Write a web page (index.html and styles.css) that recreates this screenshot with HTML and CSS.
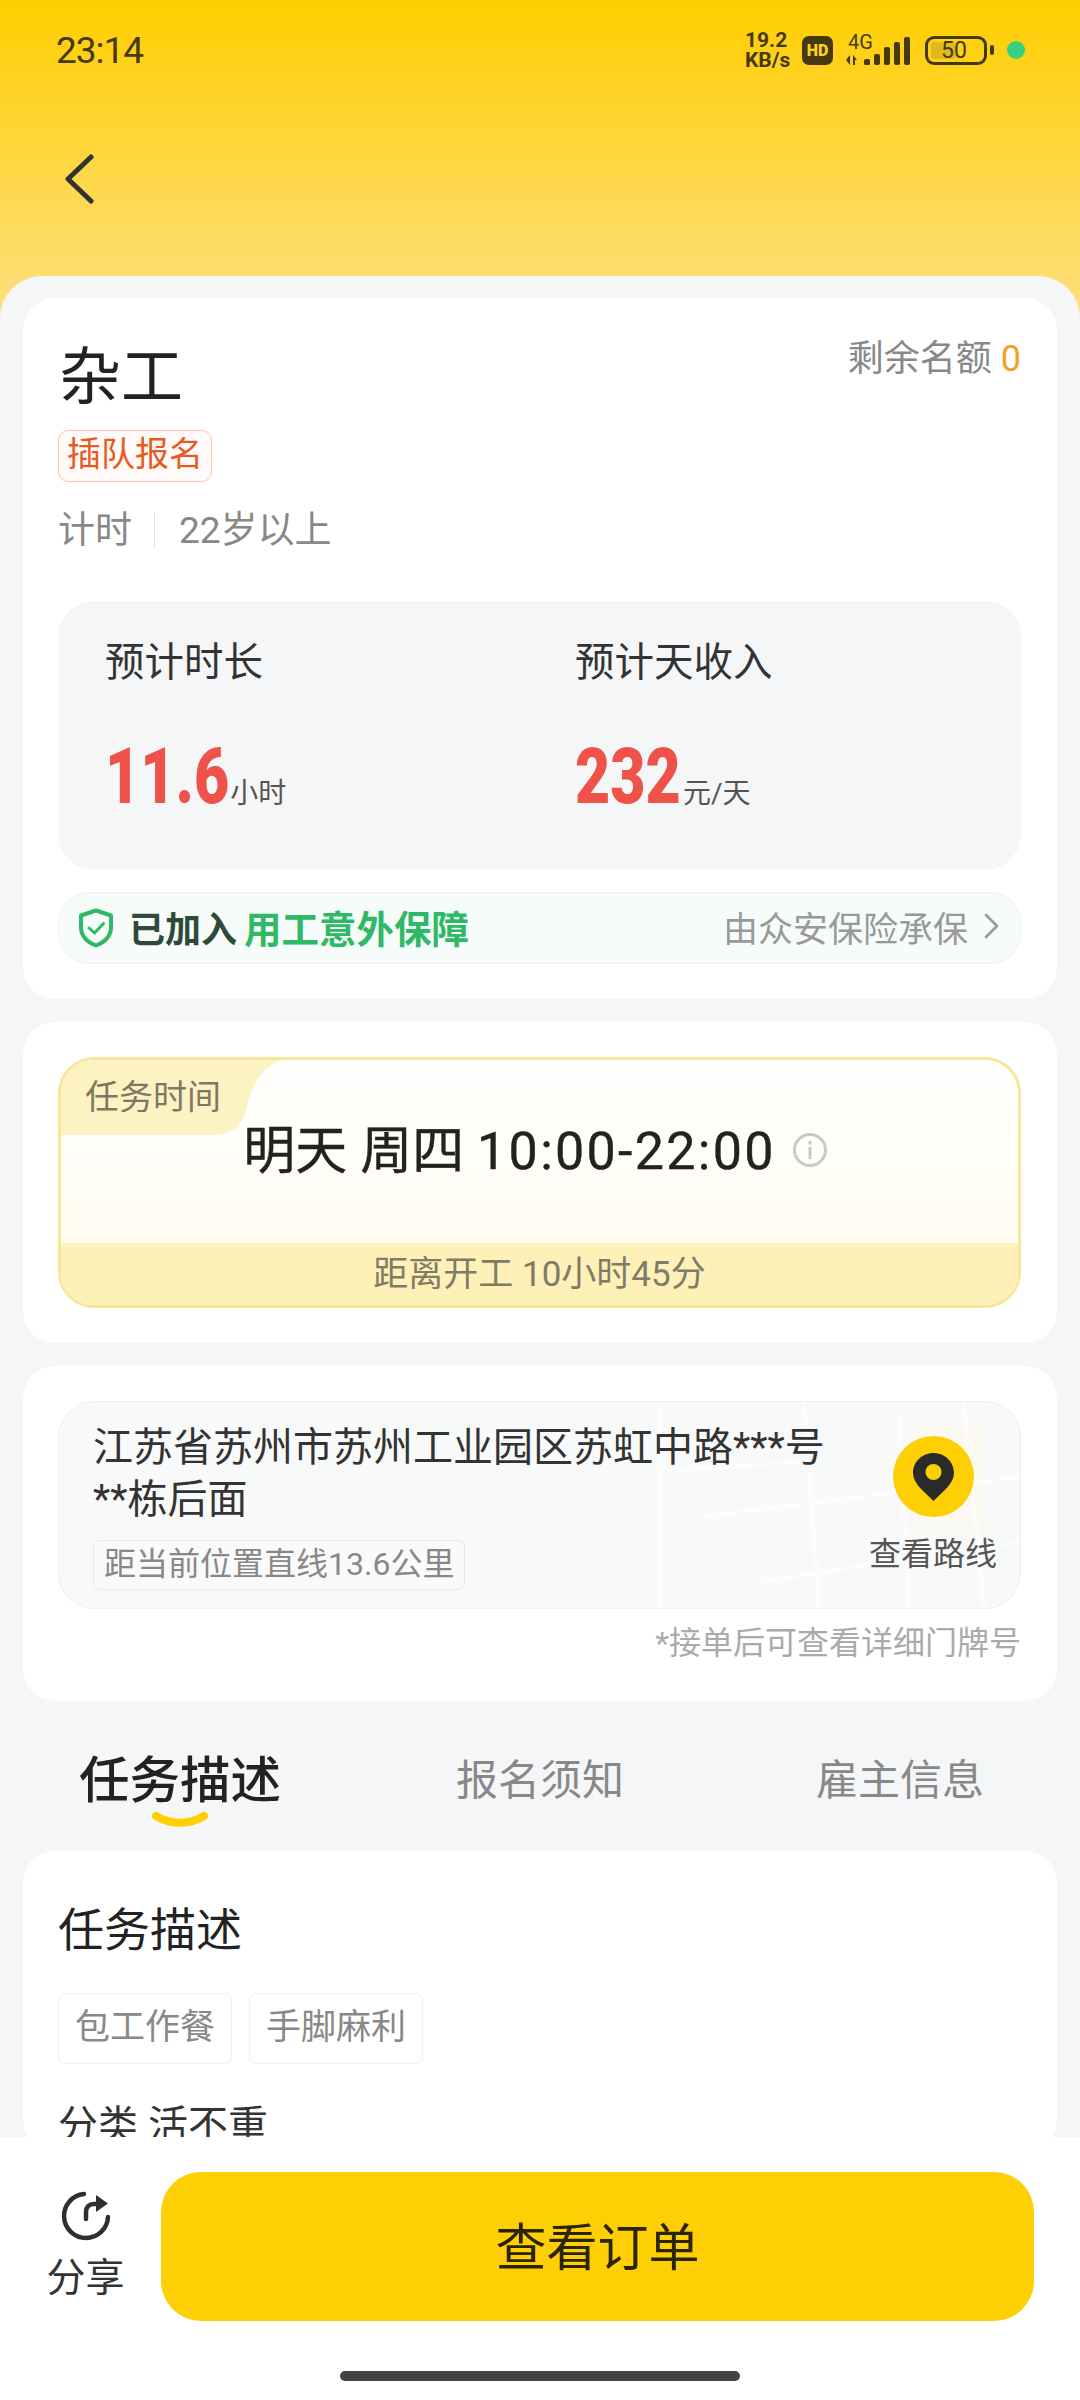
FILE: index.html
```html
<!DOCTYPE html>
<html lang="zh-CN">
<head>
    <meta charset="UTF-8">
    <meta name="viewport" content="width=device-width, initial-scale=1.0">
    <title>杂工</title>
    <link rel="stylesheet" href="styles.css">
</head>
<body>
<div class="page">
    <div class="statusbar">
        <span class="clock">23:14</span>
        <div class="status-right">
            <div class="speed"><div>19.2</div><div>KB/s</div></div>
            <div class="hd">HD</div>
            <div class="signal">
                <span class="signal-text">4G</span>
                <svg width="66" height="32" viewBox="0 0 66 32">
                    <path d="M5 21v10l-4-5zM8 21l4 5h-2v5H8z" fill="#46390f"/>
                    <rect x="19" y="25" width="6" height="6" rx="1.5" fill="#46390f"/>
                    <rect x="29" y="20" width="6" height="11" rx="2" fill="#46390f"/>
                    <rect x="39" y="13" width="6" height="18" rx="2" fill="#46390f"/>
                    <rect x="49" y="8" width="6" height="23" rx="2" fill="#46390f"/>
                    <rect x="59" y="3" width="6" height="28" rx="2" fill="#46390f"/>
                </svg>
            </div>
            <div class="battery">
                <div class="battery-fill" style="width: 50%"></div>
                <span class="battery-num">50</span>
            </div>
            <div class="battery-nub"></div>
            <div class="dot"></div>
        </div>
    </div>

    <div class="nav">
        <svg width="32" height="50" viewBox="0 0 32 50">
            <path d="M28 3 L5 25 L28 47" fill="none" stroke="#333" stroke-width="5" stroke-linecap="round" stroke-linejoin="round"/>
        </svg>
    </div>

    <div class="sheet">
        <section class="card card-job">
            <div class="job-head">
                <h1 class="job-title">杂工</h1>
                <div class="quota">剩余名额 <span class="quota-num">0</span></div>
            </div>
            <div class="tag-row"><span class="tag-orange">插队报名</span></div>
            <div class="meta">
                <span>计时</span>
                <i class="meta-line"></i>
                <span>22岁以上</span>
            </div>
            <div class="stats">
                <div class="stat">
                    <div class="stat-label">预计时长</div>
                    <div class="stat-value"><b class="num-hours">11.6</b><span>小时</span></div>
                </div>
                <div class="stat">
                    <div class="stat-label">预计天收入</div>
                    <div class="stat-value"><b class="num-pay">232</b><span>元/天</span></div>
                </div>
            </div>
            <div class="insure">
                <svg width="36" height="40" viewBox="0 0 36 40">
                    <path d="M18 2.5 L33 7.5 V19 C33 28 27 34 18 37.5 C9 34 3 28 3 19 V7.5 Z" fill="none" stroke="#2fb866" stroke-width="4" stroke-linejoin="round"/>
                    <path d="M11 20 L16.5 25 L25.5 15.5" fill="none" stroke="#2fb866" stroke-width="3" stroke-linecap="round" stroke-linejoin="round"/>
                </svg>
                <span class="insure-text">已加入<em>用工意外保障</em></span>
                <span class="insure-by">由众安保险承保</span>
                <svg width="16" height="26" viewBox="0 0 16 26">
                    <path d="M2 2 L13 13 L2 24" fill="none" stroke="#999" stroke-width="2.6" stroke-linecap="round" stroke-linejoin="round"/>
                </svg>
            </div>
        </section>

        <section class="card card-time">
            <div class="timebox">
                <div class="time-tab">
                    <svg class="time-tab-bg" width="222" height="76" viewBox="0 0 222 76">
                        <path d="M0 0H220C202 6 191 24 186 46C182 66 172 75 150 75H0Z" fill="#fdf2c2"/>
                    </svg>
                    <span class="time-tab-text">任务时间</span>
                </div>
                <div class="time-main">
                    <span>明天 周四 <span class="time-digits">10:00-22:00</span></span>
                    <svg width="36" height="36" viewBox="0 0 36 36">
                        <circle cx="18" cy="18" r="15.5" fill="none" stroke="#c9c9c9" stroke-width="3"/>
                        <rect x="16.5" y="15" width="3" height="12" fill="#c9c9c9"/>
                        <rect x="16.5" y="9" width="3" height="3.5" fill="#c9c9c9"/>
                    </svg>
                </div>
                <div class="time-foot">距离开工 10小时45分</div>
            </div>
        </section>

        <section class="card card-addr">
            <div class="addr">
                <svg class="addr-map" width="961" height="206" viewBox="0 0 961 206">
                    <path d="M850 20H925V130H850Z" fill="#fdf9f0" opacity="0.7"/>
                    <g fill="none" stroke="#fff" stroke-width="4" opacity="0.55">
                        <path d="M600 0V206M745 0L760 206M905 0L925 206"/>
                        <path d="M640 115L961 75M700 180L961 140M590 70L740 60"/>
                        <path d="M840 10L850 206"/>
                    </g>
                </svg>
                <div class="addr-left">
                    <div class="addr-text">江苏省苏州市苏州工业园区苏虹中路***号<br>**栋后面</div>
                    <span class="addr-dist">距当前位置直线13.6公里</span>
                </div>
                <div class="addr-route">
                    <svg width="81" height="81" viewBox="0 0 81 81">
                        <circle cx="40.5" cy="40.5" r="40.5" fill="#ffcf05"/>
                        <path d="M40.5 17C29 17 20 26 20 37C20 48 31 55 40.5 65C50 55 61 48 61 37C61 26 52 17 40.5 17Z" fill="#2b2b2b"/>
                        <circle cx="40.5" cy="36" r="8" fill="#ffcf05"/>
                    </svg>
                    <div class="addr-route-text">查看路线</div>
                </div>
            </div>
            <div class="addr-note">*接单后可查看详细门牌号</div>
        </section>

        <div class="tabs">
            <div class="tab tab-active">
                任务描述
                <svg class="tab-smile" width="58" height="20" viewBox="0 0 58 20">
                    <path d="M5 5C20 14 38 14 53 5" fill="none" stroke="#ffcf05" stroke-width="8" stroke-linecap="round"/>
                </svg>
            </div>
            <div class="tab">报名须知</div>
            <div class="tab">雇主信息</div>
        </div>

        <section class="card card-desc">
            <h2 class="desc-title">任务描述</h2>
            <div class="chips">
                <span class="chip">包工作餐</span>
                <span class="chip">手脚麻利</span>
            </div>
            <p class="desc-line">分类 活不重</p>
        </section>
    </div>

    <footer class="footer">
        <div class="footer-row">
            <div class="share">
                <svg width="50" height="50" viewBox="0 0 50 50">
                    <path d="M23 3A22 22 0 1 0 47 26" fill="none" stroke="#2f2f2f" stroke-width="4.5" stroke-linecap="round"/>
                    <path d="M25 28V21C25 16 28 13 33 13H37" fill="none" stroke="#2f2f2f" stroke-width="4.5" stroke-linecap="round"/>
                    <path d="M35 4L47 12.5L35 21Z" fill="#2f2f2f"/>
                </svg>
                <span class="share-text">分享</span>
            </div>
            <button class="order-btn">查看订单</button>
        </div>
        <div class="home-bar"></div>
    </footer>
</div>
</body>
</html>
```

FILE: styles.css
```css
* {
    box-sizing: border-box;
}
html, body {
    margin: 0;
    padding: 0;
}
body {
    font-family: Roboto, "Noto Sans CJK SC", sans-serif;
    color: #222;
}
.page {
    width: 1080px;
    height: 2400px;
    display: flex;
    flex-direction: column;
    overflow: hidden;
    background: linear-gradient(#ffce00 0, #fde081 320px) no-repeat;
    background-size: 100% 320px;
}

/* status bar */
.statusbar {
    height: 100px;
    flex-shrink: 0;
    display: flex;
    align-items: center;
    justify-content: space-between;
    padding: 0 55px 0 56px;
    color: #46390f;
}
.clock {
    font-size: 37px;
    letter-spacing: -1px;
}
.status-right {
    display: flex;
    align-items: center;
}
.speed {
    width: 48px;
    font-size: 21px;
    line-height: 20px;
    font-weight: 700;
}
.hd {
    width: 31px;
    height: 29px;
    margin-left: 9px;
    border-radius: 7px;
    background: #46390f;
    color: #ffd21c;
    font-size: 16px;
    font-weight: 900;
    line-height: 29px;
    text-align: center;
}
.signal {
    width: 66px;
    height: 32px;
    margin-left: 12px;
    position: relative;
}
.signal svg {
    display: block;
}
.signal-text {
    position: absolute;
    left: 3px;
    top: -2px;
    font-size: 20px;
    line-height: 20px;
}
.battery {
    width: 62px;
    height: 29px;
    margin-left: 14px;
    border: 3px solid #46390f;
    border-radius: 9px;
    padding: 3px;
    position: relative;
}
.battery-fill {
    height: 100%;
    background: #e0b91d;
    border-radius: 3px;
}
.battery-num {
    position: absolute;
    left: 13px;
    top: 0;
    font-size: 23px;
    line-height: 23px;
}
.battery-nub {
    width: 4px;
    height: 10px;
    margin-left: 3px;
    background: #46390f;
    border-radius: 2px;
}
.dot {
    width: 18px;
    height: 18px;
    margin-left: 13px;
    border-radius: 50%;
    background: #36d27f;
}

/* nav */
.nav {
    height: 176px;
    flex-shrink: 0;
    padding: 54px 0 0 63px;
}

/* sheet */
.sheet {
    flex: 1;
    min-height: 0;
    overflow: hidden;
    padding-top: 22px;
    background: #f5f6f8;
    border-radius: 42px 42px 0 0;
}
.card {
    margin: 0 23px 23px;
    background: #fff;
    border-radius: 32px;
    padding-left: 35px;
    padding-right: 36px;
}

/* job card */
.card-job {
    padding-top: 40px;
    padding-bottom: 35px;
}
.job-head {
    display: flex;
    justify-content: space-between;
    align-items: flex-start;
}
.job-title {
    margin: 3px 0 -3px 1px;
    font-size: 62px;
    line-height: 74px;
    font-weight: 400;
}
.quota {
    margin-top: -3px;
    font-size: 36px;
    line-height: 48px;
    color: #888;
}
.quota-num {
    color: #f0a326;
}
.tag-row {
    margin-top: 18px;
    display: flex;
}
.tag-orange {
    height: 52px;
    padding: 0 8px;
    border: 1.5px solid #f9c8b8;
    border-radius: 10px;
    background: #fffaf8;
    color: #e95a20;
    font-size: 34px;
    line-height: 47px;
}
.meta {
    margin-top: 25px;
    margin-bottom: -1px;
    display: flex;
    align-items: center;
    font-size: 37px;
    line-height: 48px;
    color: #888;
}
.meta-line {
    width: 1px;
    height: 36px;
    margin: 0 24px 0 22px;
    background: #e2e2e2;
}
.stats {
    height: 269px;
    margin-top: 47px;
    padding: 37px 0 0 47px;
    display: grid;
    grid-template-columns: 470px 1fr;
    background: #f5f6f8;
    border-radius: 36px;
}
.stat-label {
    font-size: 39.5px;
    line-height: 50px;
    color: #333;
}
.stat-value {
    margin-top: 49px;
    display: flex;
    align-items: baseline;
    color: #555;
    font-size: 28px;
}
.stat-value b {
    display: inline-block;
    font-size: 77px;
    font-weight: 900;
    line-height: 80px;
    color: #ee5249;
    transform: scaleX(0.79);
    transform-origin: left;
}
.num-hours {
    margin-right: -32px;
}
.num-pay {
    margin-right: -26px;
}
.insure {
    height: 72px;
    margin-top: 22px;
    padding: 0 20px 0 19px;
    display: flex;
    align-items: center;
    border: 1px solid #e9f6ef;
    border-radius: 30px;
    background: #f6fcf9;
}
.insure > svg:last-child {
    margin-top: -4px;
}
.insure-text {
    flex: 1;
    margin-left: 15px;
    margin-top: -3px;
    font-size: 36px;
    font-weight: 700;
    color: #2e4a3b;
}
.insure-text em {
    margin-left: 7px;
    font-size: 37.5px;
    font-style: normal;
    color: #2fb866;
}
.insure-by {
    margin-right: 16px;
    margin-top: -3px;
    font-size: 35px;
    color: #999;
}

/* time card */
.card-time {
    padding-top: 35px;
    padding-bottom: 35px;
}
.timebox {
    height: 251px;
    display: flex;
    flex-direction: column;
    position: relative;
    overflow: hidden;
    border: 3px solid #f8e79a;
    border-radius: 36px;
    background: linear-gradient(#fff, #fffbeb);
}
.time-tab {
    position: absolute;
    left: 0;
    top: 0;
    width: 222px;
    height: 76px;
}
.time-tab-bg {
    display: block;
}
.time-tab-text {
    position: absolute;
    left: 24px;
    top: 14px;
    font-size: 34px;
    line-height: 46px;
    color: #7d7863;
}
.time-main {
    flex: 1;
    padding: 65px 8px 0 0;
    display: flex;
    justify-content: center;
    gap: 16px;
    font-size: 52px;
    line-height: 54px;
    font-weight: 400;
    color: #222;
    -webkit-text-stroke: 0.4px #222;
}
.time-digits {
    letter-spacing: 2.3px;
}
.time-main svg {
    margin-top: 7px;
}
.time-foot {
    height: 62px;
    background: #fdf1b8;
    font-size: 35px;
    line-height: 64px;
    text-align: center;
    color: #807b66;
}

/* address card */
.card-addr {
    padding-top: 35px;
    padding-bottom: 36px;
    margin-bottom: 0;
}
.addr {
    height: 208px;
    display: flex;
    justify-content: space-between;
    position: relative;
    overflow: hidden;
    border: 1px solid #eeeff0;
    border-radius: 36px;
    background: #f8f9f9;
}
.addr-map {
    position: absolute;
    left: 0;
    top: 0;
}
.addr-left {
    position: relative;
    padding: 20px 0 0 34px;
}
.addr-text {
    font-size: 40px;
    line-height: 52px;
    color: #333;
}
.addr-dist {
    display: inline-block;
    height: 50px;
    margin-top: 14px;
    padding: 0 10px;
    border: 1px solid #e8e8e8;
    border-radius: 7px;
    background: #fafafa;
    font-size: 32px;
    line-height: 47px;
    color: #888;
}
.addr-route {
    position: relative;
    width: 174px;
    padding-top: 34px;
    display: flex;
    flex-direction: column;
    align-items: center;
}
.addr-route-text {
    margin-top: 17px;
    font-size: 32px;
    line-height: 40px;
    color: #555;
}
.addr-note {
    margin-top: 12px;
    font-size: 32px;
    line-height: 44px;
    text-align: right;
    color: #aaa;
}

/* tabs */
.tabs {
    height: 150px;
    padding-top: 50px;
    display: grid;
    grid-template-columns: repeat(3, 1fr);
}
.tab {
    font-size: 42px;
    line-height: 60px;
    text-align: center;
    color: #888;
    position: relative;
}
.tab-active {
    font-size: 50.5px;
    font-weight: 500;
    color: #222;
}
.tab-smile {
    position: absolute;
    left: 151px;
    top: 60px;
}

/* description card */
.card-desc {
    padding-top: 49px;
    margin-bottom: 0;
}
.desc-title {
    margin: 0;
    font-size: 46px;
    line-height: 60px;
    font-weight: 400;
    color: #222;
}
.chips {
    margin-top: 33px;
    display: flex;
    gap: 17px;
}
.chip {
    height: 71px;
    padding: 0 16px;
    border: 1px solid #eee;
    border-radius: 7px;
    font-size: 35px;
    line-height: 67px;
    color: #888;
}
.desc-line {
    margin: 37px 0 0;
    font-size: 40px;
    line-height: 50px;
    color: #333;
}

/* footer */
.footer {
    height: 263px;
    flex-shrink: 0;
    padding-top: 35px;
    background: #fff;
}
.footer-row {
    height: 149px;
    display: flex;
}
.share {
    width: 161px;
    padding: 19px 0 0 10px;
    display: flex;
    flex-direction: column;
    align-items: center;
}
.share-text {
    margin-top: 15px;
    font-size: 39px;
    line-height: 44px;
    color: #333;
}
.order-btn {
    width: 873px;
    height: 149px;
    padding-bottom: 6px;
    border: none;
    border-radius: 40px;
    background: #ffcf05;
    font-family: inherit;
    font-size: 51px;
    color: #2b2400;
}
.home-bar {
    width: 400px;
    height: 10px;
    margin: 50px auto 0;
    border-radius: 5px;
    background: #444;
}
```
